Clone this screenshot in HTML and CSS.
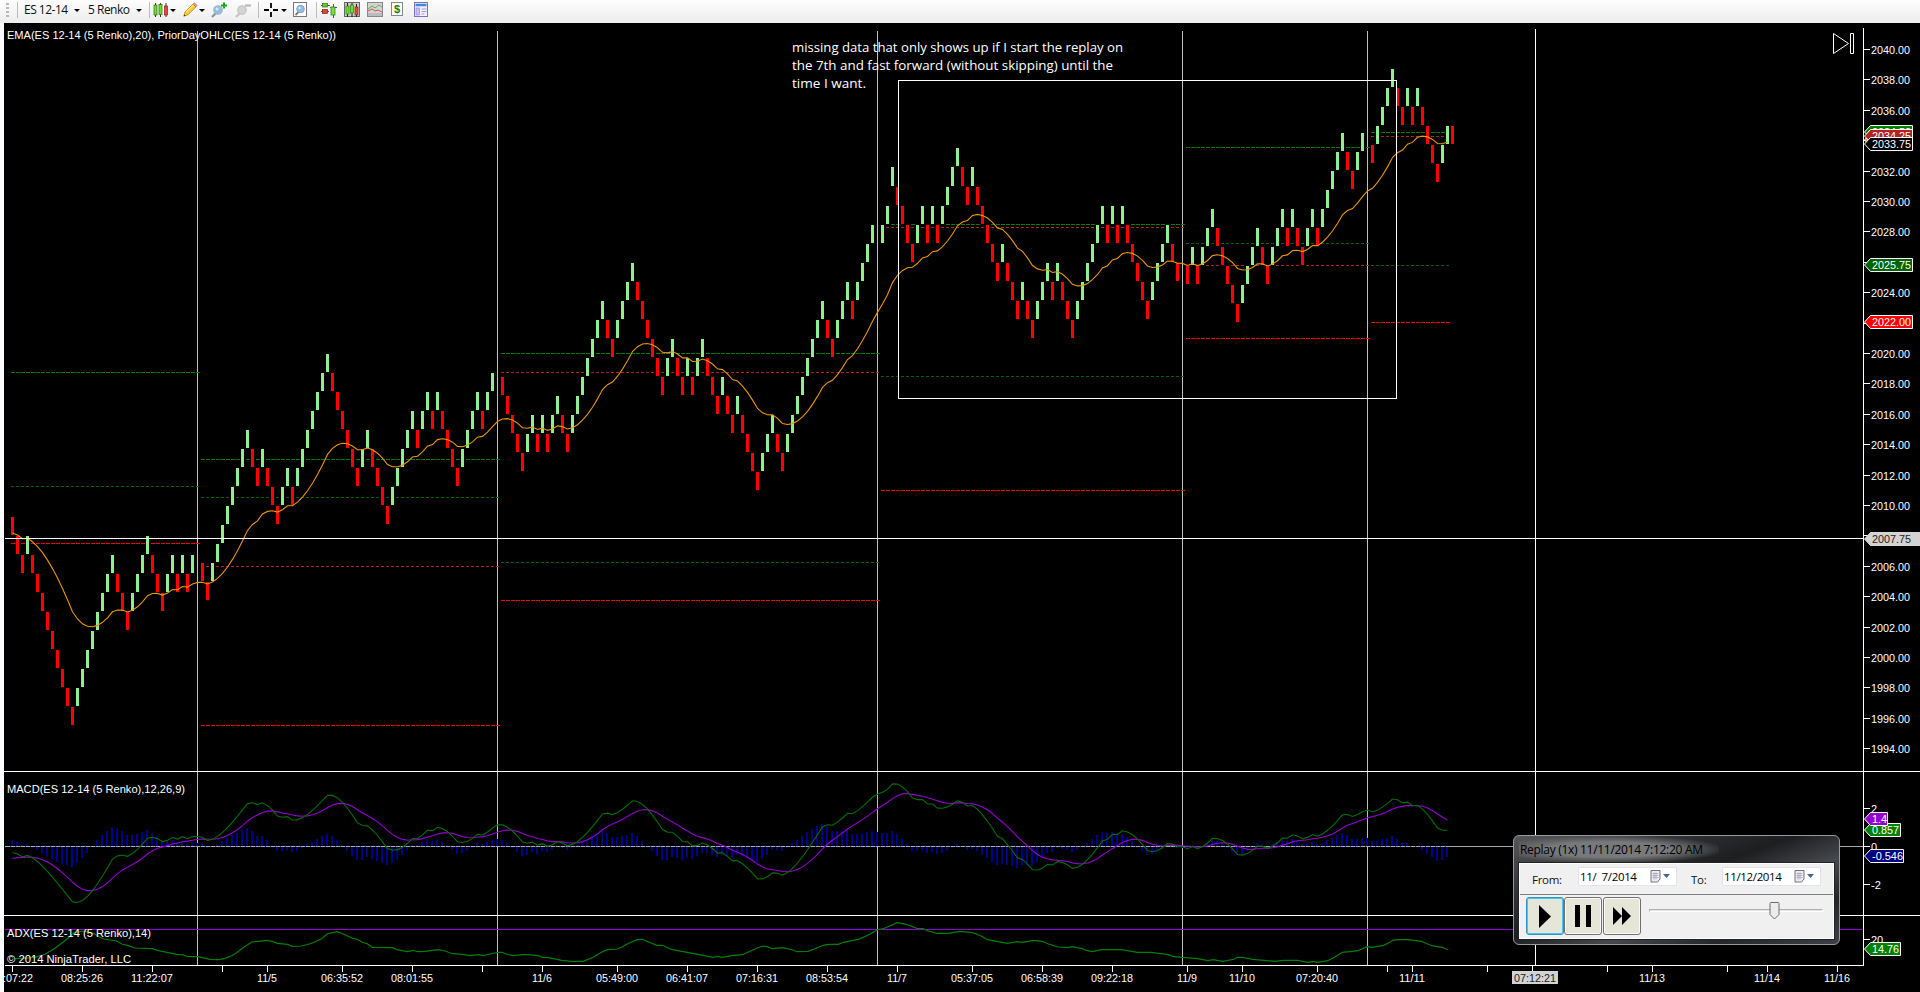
FILE: index.html
```html
<!DOCTYPE html>
<html lang="en">
<head>
<meta charset="utf-8">
<title>ES 12-14 (5 Renko)</title>
<link rel="stylesheet" href="styles.css">
</head>
<body>
<header class="toolbar">
  <span class="grip"></span>
  <span class="sep"></span>
  <span class="pick">ES 12-14</span><i class="caret"></i>
  <span class="pick">5 Renko</span><i class="caret"></i>
  <span class="sep"></span>
  <svg width="16" height="16" viewBox="0 0 16 16"><path d="M2.5 1v14M7.5 1v14M13 1v14" stroke="#333"/><rect x="1" y="3" width="3" height="10" fill="#6fe02c" stroke="#286c10" stroke-width=".7"/><rect x="6" y="2.500" width="3" height="10" fill="#6fe02c" stroke="#286c10" stroke-width=".7"/><rect x="11.500" y="4" width="3" height="9" fill="#e84b3c" stroke="#8c1c14" stroke-width=".7"/></svg>
  <i class="caret"></i>
  <svg width="16" height="16" viewBox="0 0 16 16"><path d="M2 14l1-4 8-8 3 2.800-8 8z" fill="#f7d038" stroke="#b48a10" stroke-width=".8"/><path d="M11 2l1.300-1.200 2.900 2.700L14 4.800z" fill="#e8a0a0" stroke="#a06060" stroke-width=".6"/><path d="M4 10l7.500-7" stroke="#fff2a0"/><path d="M1.500 14.500l.8-2 1.400 1.300z" fill="#333"/></svg>
  <i class="caret"></i>
  <svg width="16" height="16" viewBox="0 0 16 16"><path d="M5 11l-4 4" stroke="#8a8f98" stroke-width="2.200"/><circle cx="7" cy="8" r="4.200" fill="#8cbfe8" stroke="#a8b4c4" stroke-width="1.300"/><circle cx="6" cy="7" r="1.500" fill="#d4e9f9"/><path d="M10 3.500h6M13 .5v6" stroke="#18a818" stroke-width="2"/></svg>
  <svg width="16" height="16" viewBox="0 0 16 16"><path d="M5 11l-4 4" stroke="#c4c4c4" stroke-width="2.200"/><circle cx="7" cy="8" r="4.200" fill="#d4d4d4" stroke="#c4c4c4" stroke-width="1.300"/><path d="M10 3.500h6" stroke="#b4b4b4" stroke-width="2"/></svg>
  <span class="sep"></span>
  <svg width="14" height="14" viewBox="0 0 14 14"><path d="M7 0v5M7 9v5M0 7h5M9 7h5" stroke="#000" stroke-width="1.800"/></svg>
  <i class="caret"></i>
  <svg width="15" height="16" viewBox="0 0 15 16"><rect x=".5" y=".5" width="13" height="14" fill="#fff" stroke="#777"/><path d="M5.500 10l-3 3" stroke="#777" stroke-width="1.800"/><circle cx="7.500" cy="7" r="3.800" fill="#8cbfe8" stroke="#8fa2b8"/><circle cx="6.500" cy="6" r="1.200" fill="#d4e9f9"/></svg>
  <span class="sep"></span>
  <svg width="17" height="16" viewBox="0 0 17 16"><path d="M0 3.500h9M0 9.500h8M9 5.500h7M12.500 2v14" stroke="#555"/><rect x="1.500" y="1.500" width="5" height="3.500" fill="#5ccc30" stroke="#2b7414" stroke-width=".7"/><rect x="1.500" y="7.500" width="5" height="4" fill="#e24434" stroke="#921c10" stroke-width=".7"/><rect x="10" y="5" width="4" height="8" fill="#78e040" stroke="#2b7414" stroke-width=".7"/></svg>
  <svg width="16" height="16" viewBox="0 0 16 16"><rect x=".5" y=".5" width="15" height="14" fill="#c9c9c9" stroke="#666"/><path d="M3.500 1v14M8 1v14M12.500 2v13" stroke="#222"/><rect x="2" y="4" width="3" height="8" fill="#6fe02c" stroke="#286c10" stroke-width=".6"/><rect x="6.500" y="3" width="3" height="8" fill="#6fe02c" stroke="#286c10" stroke-width=".6"/><rect x="11" y="5" width="3" height="8" fill="#e84b3c" stroke="#8c1c14" stroke-width=".6"/></svg>
  <svg width="16" height="16" viewBox="0 0 16 16"><rect x=".5" y=".5" width="15" height="14" fill="#d4d4d4" stroke="#888"/><path d="M1 7l4-3 3 2 4-3 3 2" fill="none" stroke="#58b058"/><path d="M1 9l4-2 3 2 3-1 4 2" fill="none" stroke="#d05050"/><path d="M1 12.500h14" stroke="#bbb" stroke-width="3"/></svg>
  <svg width="13" height="16" viewBox="0 0 13 16"><rect x=".5" y=".5" width="11" height="13" fill="#fff" stroke="#888"/><text class="dollar" x="6" y="11" text-anchor="middle">$</text></svg>
  <svg width="15" height="16" viewBox="0 0 15 16"><rect x=".5" y=".5" width="13" height="14" fill="#f3f0ff" stroke="#7a74c0"/><path d="M1.500 3h11" stroke="#3e8ae0" stroke-width="2.500"/><rect x="2" y="6" width="3.500" height="7" fill="#c8bff0" stroke="#8a80cc" stroke-width=".6"/><path d="M7.500 7h5M7.500 9.500h5M7.500 12h3" stroke="#a09ad8"/></svg>
</header>
<main class="workspace">
  <svg class="chart" id="chart" width="1920" height="969" viewBox="0 23 1920 969" shape-rendering="crispEdges"></svg>
  <section class="replay">
    <h1 class="replay-title">Replay (1x) 11/11/2014 7:12:20 AM</h1>
    <div class="client">
      <div class="dates">
        <label class="lbl">From:</label>
        <div class="date"><span>11/&nbsp; 7/2014</span>
          <svg width="20" height="13" viewBox="0 0 20 13"><path d="M1 .5h9v8.500l-2.500 3H1z" fill="#f1ecf0" stroke="#766e76"/><path d="M2.500 3.500h6M2.500 5.500h6M2.500 7.500h6M4 2.500v7M6 2.500v7" stroke="#8e98b4" stroke-width=".6"/><path d="M13 4h7l-3.500 4z" fill="#48608c"/></svg></div>
        <label class="lbl">To:</label>
        <div class="date"><span>11/12/2014</span>
          <svg width="20" height="13" viewBox="0 0 20 13"><path d="M1 .5h9v8.500l-2.500 3H1z" fill="#f1ecf0" stroke="#766e76"/><path d="M2.500 3.500h6M2.500 5.500h6M2.500 7.500h6M4 2.500v7M6 2.500v7" stroke="#8e98b4" stroke-width=".6"/><path d="M13 4h7l-3.500 4z" fill="#48608c"/></svg></div>
      </div>
      <div class="controls">
        <button class="btn active"><svg width="14" height="24"><path d="M1 1l12 11.500L1 24z"/></svg></button>
        <button class="btn"><svg width="16" height="22"><path d="M0 0h5v22H0zM11 0h5v22h-5z"/></svg></button>
        <button class="btn third"><svg width="18" height="18"><path d="M0 0l9 9-9 9zM9 0l9 9-9 9z"/></svg></button>
        <div class="slider"><svg class="thumb" width="11" height="18" viewBox="0 0 11 18"><path d="M1.500.5h8l.5 1v11L5.500 17 1 12.500v-11z" fill="#ececec" stroke="#6c6c6c"/></svg></div>
      </div>
    </div>
  </section>
</main>
<script src="chart.js"></script>
</body>
</html>
```
FILE: styles.css
```css
* { box-sizing: border-box; }
body { margin: 0; background: #fbfcfe; overflow: hidden; font-family: "Liberation Sans", Arial, sans-serif; }

.toolbar {
  height: 23px;
  padding-left: 6px;
  display: grid;
  grid-template-columns: 11px 7px 50px 14px 48px 13px 5px 16px 13px 16px 13px 24px 22px 7px 16px 13px 22px 6px 23px 23px 24px 23px 16px;
  align-items: center;
  background: linear-gradient(#fdfdfd, #ededed);
}
.toolbar svg { margin: -3px 0 0 -1px; }
.grip { width: 3px; height: 15px; margin-top: -3px; background: repeating-linear-gradient(#b8b8b8 0 2px, transparent 2px 4px); }
.sep { width: 1px; height: 16px; margin-top: -4px; background: #bdbdbd; }
.pick { font: 12px/16px "Open Sans", "Noto Sans", sans-serif; letter-spacing: -.5px; white-space: nowrap; margin-top: -4px; color: #111; }
.caret { width: 0; height: 0; margin: -2px 0 0 0; border: 3px solid transparent; border-top-color: #000; border-bottom: 0; }
.dollar { font: bold 11px "Liberation Sans", sans-serif; fill: #148014; }

.workspace { position: relative; height: 969px; }
.chart { display: block; }
.chart text { font: 11px "Liberation Sans", Arial, sans-serif; fill: #fff; white-space: pre; }
.chart text.note { font: 12.500px "Open Sans", "Noto Sans", sans-serif; }
.chart text.dark { fill: #222; }

.replay {
  position: absolute;
  left: 1513px;
  top: 812px;
  width: 327px;
  height: 110px;
  padding: 0 5px;
  border: 1px solid #999;
  border-radius: 6px;
  background: linear-gradient(160deg, #555759 0, #313336 25%, #1d1e20 45%, #45484c 62%, #24262a 80%, #3d4046 100%);
}
.replay-title {
  height: 27px;
  width: 200px;
  margin: 0;
  padding-left: 1px;
  font: 12px/27px "Open Sans", "Noto Sans", sans-serif;
  letter-spacing: -.3px;
  white-space: nowrap;
  color: #000;
  background: radial-gradient(ellipse at 45% 50%, #77797b 40%, transparent 75%);
}
.client { height: 76px; width: 315px; border: 1px solid #fff; outline: 1px solid #222; background: #f0f0f0; }
.dates { height: 31px; display: flex; align-items: flex-start; padding: 3px 10px 0 12px; border-bottom: 1px solid #808080; }
.lbl { font: 11.500px/26px "Open Sans", "Noto Sans", sans-serif; letter-spacing: -.3px; width: 46px; color: #111; }
.date + .lbl { margin-left: 14px; width: 31px; }
.date {
  width: 99px; height: 19px; padding: 0 6px 0 1px; flex: none;
  display: flex; justify-content: space-between; align-items: center;
  border: 1px solid #e0e4ee; background: #fff;
  font: 11.500px/17px "Open Sans", "Noto Sans", sans-serif; letter-spacing: -.35px; white-space: nowrap;
}
.controls { display: flex; padding: 2px 0 0 6px; }
.btn {
  width: 38px; height: 38px; padding: 0; display: flex; align-items: center; justify-content: center;
  border: 1px solid #707070; border-radius: 3px; background: #e6e6d8; box-shadow: inset 0 0 0 1px #fafafa;
}
.btn.active { border-color: #2a94c4; box-shadow: inset 0 0 0 1px #48c8f0; }
.btn.third { margin-left: 1px; }
.slider { position: relative; width: 174px; height: 3px; margin: 12px 0 0 8px; border: 1px solid #b0b0b0; border-right-color: #fff; border-bottom-color: #fff; background: #e4e4e4; }
.thumb { position: absolute; left: 119px; top: -8px; }
```
FILE: chart.js
```js
// Renko bricks: [first column, top of level 0, level before the first brick, first direction, run lengths]
const segments = [
  [0, 517, -1, 1, [3,1,9,8,3,4,3,2,1,1,1,1]],
  [38, 563, -1, 1, [2,8,2,1,3,2,1,7,6,2,4,5,1,2,1,1,4,4,1,2]],
  [98, 377, -1, 1, [5,2,1,1,1,2,2,7,2,4,6,2,2,1,1,2,3,1,2,1,4,3,2,8,2,3,1,4]],
  [174, 225, 1, -1, [2]],
  [176, 225, -2, -1, [1,4,2,1,1,1,4,2,1,5,1,3,1,2,3,1,1,3,6,1,1,1,1,5,4,2]],
  [235, 266, -1, 1, [1,1,1,3,5,4,2,3,1,1,2,2,1,5,2,2]],
  [272, 145, -1, 1, [1,4,2,1,1,1,4,2]],
  [288, 145, -2, 1, [1]]
];
const closes = [];
// session-end closes
closes[37] = 566.5; closes[97] = 373; closes[173] = 227.5; closes[234] = 265.5; closes[271] = 136.5;

const out = [];
const rect = (x, y, w, h, fill, extra = '') => out.push(`<rect x="${x}" y="${y}" width="${w}" height="${h}" fill="${fill}" ${extra}/>`);
const text = (x, y, s, w, o = {}) => out.push(`<text x="${x}" y="${y}" class="${o.cls || ''}" text-anchor="${o.anchor || 'start'}"${w ? ` textLength="${w}" lengthAdjust="spacingAndGlyphs"` : ''}>${s}</text>`);
const line = (pts, color, w = 1) => out.push(`<polyline points="${pts.map(p => p[0].toFixed(1) + ',' + p[1].toFixed(1)).join(' ')}" fill="none" stroke="${color}" stroke-width="${w}" shape-rendering="auto"/>`);

rect(4, 23, 1916, 969, '#000');

// session separators
for (const x of [197, 497, 877, 1182, 1367]) rect(x, 31, 1, 934, '#c0c0c0');

// prior-day levels: x1, x2, y, colour, dash
const G = '#008000', D = '#006400', R = '#f00', F = '#b22222';
[[11,200,372,G,4],[11,199,486,D,3],[11,200,543,R,4],
 [201,500,459,G,4],[201,499,497,D,3],[201,499,566,F,3],[201,500,725,R,4],
 [501,880,353,G,4],[501,879,372,F,3],[501,879,562,D,3],[501,880,600,R,4],
 [881,1185,224,G,4],[886,1184,227,F,3],[881,1184,376,D,3],[881,1185,490,R,4],
 [1186,1370,147,G,4],[1186,1369,243,D,3],[1186,1369,265,F,3],[1186,1370,338,R,4],
 [1371,1447,132,G,4],[1371,1446,136,F,3],[1371,1450,265,D,3],[1371,1450,322,R,4]
].forEach(([a, b, y, c, d]) => out.push(`<path d="M${a} ${y + .5}H${b}" stroke="${c}" stroke-dasharray="${d} ${5 - d}"/>`));

for (const [start, base, before, dir0, runs] of segments) {
  let i = start, level = before, dir = dir0;
  for (const n of runs) {
    for (let k = 0; k < n; k++, i++) {
      level += dir;
      let top = base + level * 19, h = 18;
      if (base === 225 && level <= -3) { top--; if (level === -3) h = 19; }
      rect(10 + 5 * i, top - 1, 5, h + 2, '#000');
      rect(11 + 5 * i, top, 3, h, dir > 0 ? '#ff0000' : '#90ee90');
      closes[i] = dir > 0 ? top + h : top;
    }
    dir = -dir;
  }
}

const ema = (src, period, seed) => {
  const a = 2 / (period + 1), r = [seed];
  for (let i = 1; i < src.length; i++) r[i] = r[i - 1] + a * (src[i] - r[i - 1]);
  return r;
};
const used = closes.slice(0, 288);
const xs = i => 12.5 + 5 * i;
line(ema(used, 20, 532.7).map((y, i) => [xs(i), y + .3]), '#e8960a', 1.1);

// marked area and cursor
out.push('<rect x="898.500" y="80.500" width="498" height="318" fill="none" stroke="#fff"/>');
rect(5, 538, 1858, 1, '#fff');
rect(1535, 29, 1, 936, '#fff');

// MACD
const fast = ema(used, 12, 535), slow = ema(used, 26, 530.2);
const macd = fast.map((v, i) => (v - slow[i]) * 19 / 15.17);
const avg = ema(macd, 9, 12);
macd.forEach((v, i) => {
  const d = Math.round(v - avg[i]);
  if (d < 0) rect(11 + 5 * i, 846 + d, 2, -d, '#00008b');
  else if (d > 0) rect(11 + 5 * i, 846, 2, d + 1, '#00008b');
});
rect(5, 846, 1858, 1, '#a9a9a9');
macd.forEach((v, i) => rect(10 + 5 * i, 846, 1, 1, '#45456a'));
line(avg.map((v, i) => [xs(i), 846.5 + v]), '#9400d3', 1.1);
line(macd.map((v, i) => [xs(i), 846.5 + v]), '#007000', 1.1);

// ADX
rect(5, 929, 1858, 1, '#9400d3');
const adx = (s, ox, k) => s.split(' ').map(p => p.split(',').map(Number)).map(([x, y]) => [ox + x / k, 760 + y / 3]);
line([
  ...adx('36,597 105,592 135,583 165,565 200,538 222,518 250,513 280,520 300,532 312,537 350,543 367,553 385,557 405,564 457,566 472,571 530,583 547,584 562,589 595,590 630,598 655,599 675,595 695,587 712,577 725,566 755,546 775,544 800,541 817,544 832,550 862,553 877,559 905,558 935,550 965,536 982,521 1012,515 1035,524 1057,535 1072,538 1087,547 1102,551 1117,562 1177,563 1192,569 1222,575 1240,571 1252,575 1275,574 1315,569 1335,573 1357,581 1387,583 1410,587 1435,584 1450,587', 0, 3),
  ...adx('30,582 55,577 67,577 80,583 100,587 135,583 175,587 187,592 205,593 245,601 275,604 310,604 340,592 367,575 382,569 412,567 427,560 443,551 472,539 487,538 530,556 547,556 577,569 622,577 700,592 712,589 727,592 755,587 787,584 830,565 847,559 862,560 877,566 907,563 937,569 950,575 985,574 1030,556 1045,553 1075,553 1090,547 1135,538 1165,525 1192,509 1210,506 1252,488 1280,493 1310,505 1330,506 1345,513 1370,520 1405,520 1440,514', 480, 3),
  ...adx('37,518 62,528 80,539 110,545 138,550 165,545 180,547 215,541 238,544 255,551 285,561 315,563 325,560 355,566 370,572 385,575 410,569 470,569 515,577 555,577 605,584 620,590 690,596 720,602 735,599 763,604 795,598 805,592 820,592 850,598 915,604 940,601 980,601 1010,607 1025,604 1038,607 1068,602 1090,590 1110,577 1140,574 1155,572 1183,560 1197,562 1230,556 1243,550 1257,541 1270,539 1300,539 1340,544 1370,557 1400,562 1416,569', 960, 2.904)
], '#008000', 1.2);

// panel borders and axes
rect(4, 771, 1916, 1, '#fff');
rect(4, 915, 1916, 1, '#fff');
rect(5, 965, 1859, 1, '#fff');
rect(1863, 28, 1, 938, '#fff');

for (let p = 2040; p >= 1994; p -= 2) {
  const y = Math.round(49 + (2040 - p) * 15.2);
  rect(1863, y, 7, 1, '#fff');
  if (![2034, 2026, 2022, 2008].includes(p)) text(1871, y + 5, p + '.00', 39);
}
[[808, '2'], [846, '0'], [884, '-2'], [939, '20']].forEach(([y, s]) => { rect(1863, y, 7, 1, '#fff'); text(1871, y + 5, s); });

const tag = (cy, right, fill, s, w, o = {}) => {
  const b = o.border || '#fff';
  out.push(`<path d="M1864.500 ${cy}L1870.500 ${cy - 6.500}H${right}V${cy + 6.500}H1870.500Z" fill="${fill}" stroke="${b}" shape-rendering="auto"/>`);
  if (s) text(1872, cy + 4, s, w, o);
};
tag(140, 1912.5, '#ffa500', '');
tag(132, 1912.5, '#008000', '2034.50', 39);
tag(136, 1912.5, '#b22222', '2034.25', 39);
tag(144, 1912.5, '#000', '2033.75', 39);
tag(265, 1912.5, '#006400', '2025.75', 39);
tag(322, 1912.5, '#ff0000', '2022.00', 39);
tag(539, 1921, '#d3d3d3', '2007.75', 39, { cls: 'dark', border: '#d3d3d3' });
tag(830, 1900.5, '#008000', '0.857', 27);
tag(819, 1887.5, '#9400d3', '1.4', 15);
tag(856, 1903.5, '#000080', '-0.546', 31);
tag(949, 1900.5, '#008000', '14.76', 27);

[[12, '06:07:22'], [82, '08:25:26'], [152, '11:22:07'], [222, ''], [267, '11/5'], [342, '06:35:52'], [412, '08:01:55'], [482, ''],
 [542, '11/6'], [617, '05:49:00'], [687, '06:41:07'], [757, '07:16:31'], [827, '08:53:54'], [897, '11/7'], [972, '05:37:05'],
 [1042, '06:58:39'], [1112, '09:22:18'], [1187, '11/9'], [1242, '11/10'], [1317, '07:20:40'], [1387, ''], [1412, '11/11'],
 [1487, ''], [1532, ''], [1607, ''], [1652, '11/13'], [1727, ''], [1767, '11/14'], [1837, '11/16']
].forEach(([x, s]) => {
  rect(x, 965, 1, 7, '#fff');
  if (s) text(x, 982, s, s.length === 8 ? 42 : s.length === 5 ? 26 : 20, { anchor: 'middle' });
});
rect(0, 966, 4, 26, '#fbfcfe');
rect(1512, 971, 46, 13, '#d3d3d3');
text(1514, 982, '07:12:21', 42, { cls: 'dark' });

text(7, 39, 'EMA(ES 12-14 (5 Renko),20), PriorDayOHLC(ES 12-14 (5 Renko))', 329);
text(7, 793, 'MACD(ES 12-14 (5 Renko),12,26,9)', 178);
text(7, 937, 'ADX(ES 12-14 (5 Renko),14)', 144);
text(7, 963, '© 2014 NinjaTrader, LLC', 124);
text(792, 52, 'missing data that only shows up if I start the replay on', 331, { cls: 'note' });
text(792, 70, 'the 7th and fast forward (without skipping) until the', 321, { cls: 'note' });
text(792, 88, 'time I want.', 74, { cls: 'note' });
out.push('<path d="M1833.500 33.500V53.500L1848.500 43.500ZM1850.500 33.500h3v20h-3z" fill="none" stroke="#fff" shape-rendering="auto"/>');

document.getElementById('chart').innerHTML = out.join('');
```
